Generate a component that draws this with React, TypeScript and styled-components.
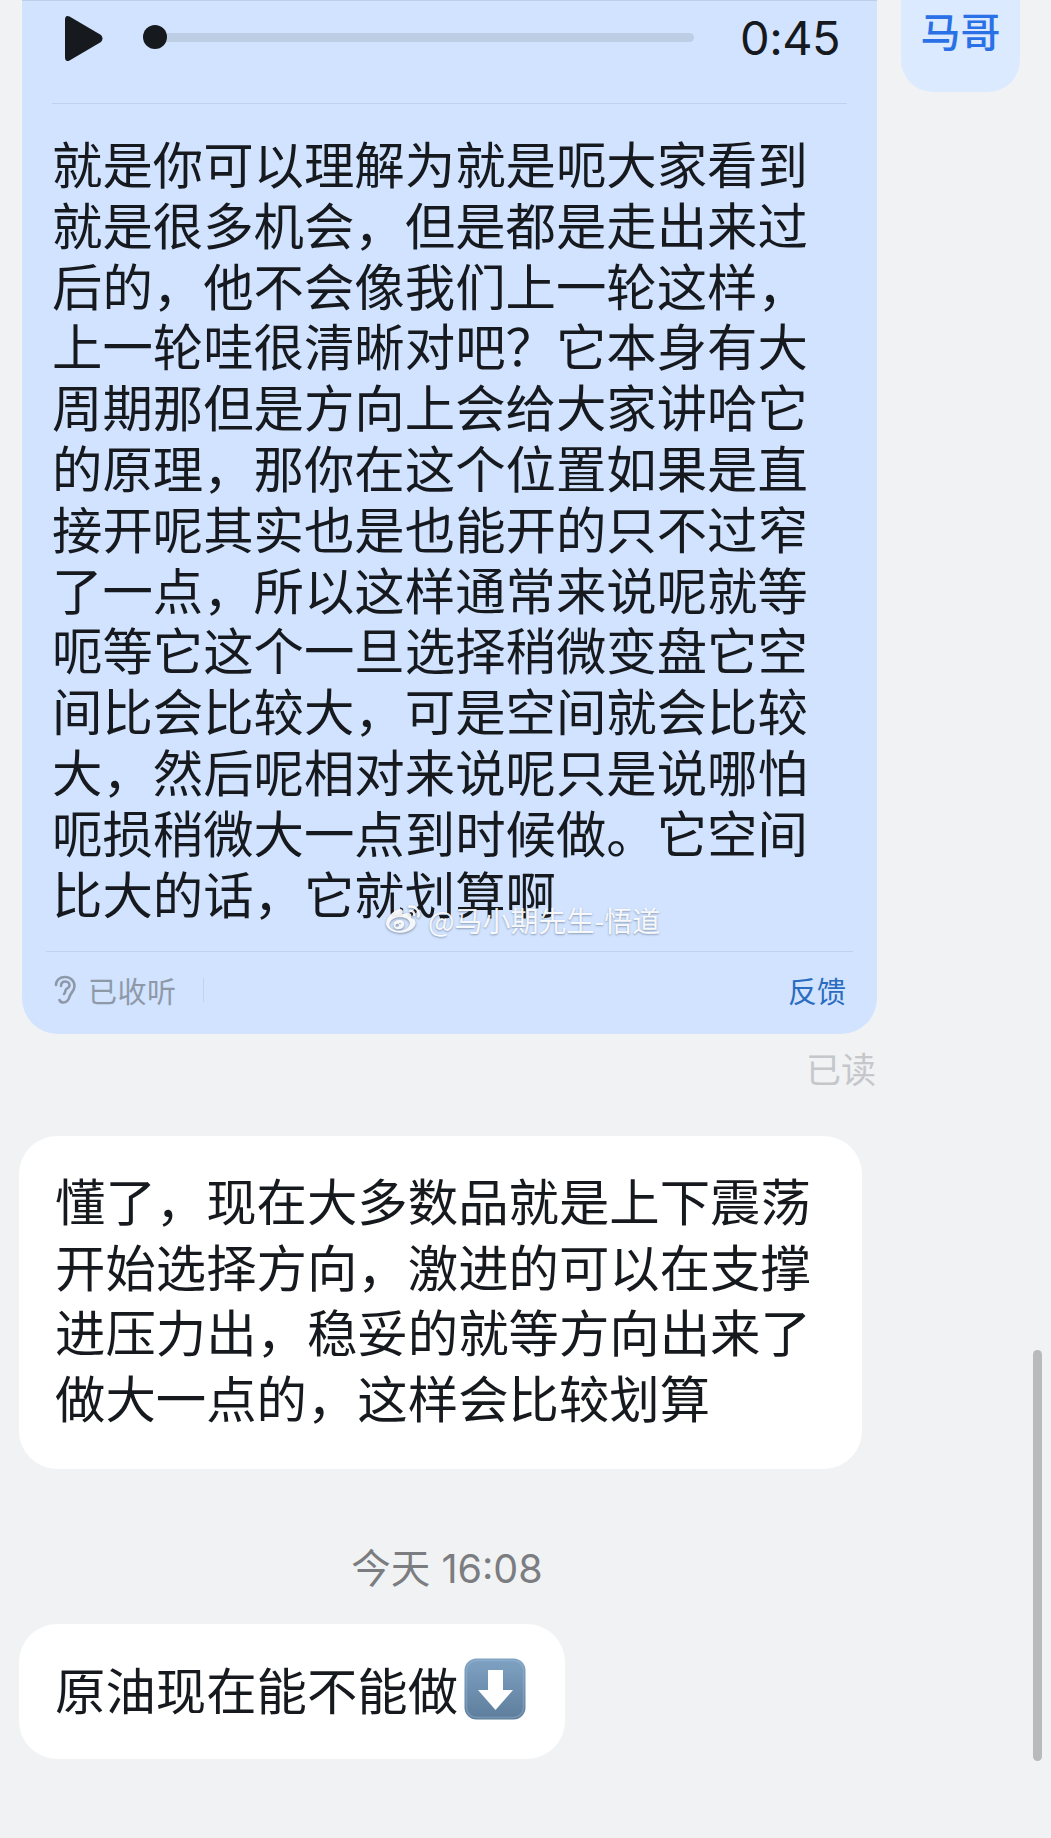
import React from 'react';
import styled, { createGlobalStyle } from 'styled-components';
import { FaWeibo } from 'react-icons/fa';

const GlobalStyle = createGlobalStyle`
  html, body {
    margin: 0;
    padding: 0;
    background: #f1f2f4;
  }
`

const Page = styled.div`
  position: relative;
  width: 1051px;
  height: 1838px;
  overflow: hidden;
  display: flex;
  flex-direction: column;
  background: #f1f2f4;
  color: #16191d;
  font-family: Inter, "Noto Sans CJK SC", sans-serif;
`

const TopRow = styled.div`
  display: flex;
  align-items: flex-start;
  gap: 24px;
  padding-left: 22px;
`

const VoiceBubble = styled.div`
  width: 855px;
  height: 1034px;
  box-sizing: border-box;
  display: flex;
  flex-direction: column;
  padding: 0 24px;
  background: #d1e3ff;
  border-top: 1px solid #bccfe9;
  border-radius: 0 0 36px 36px;
`

const NameTag = styled.div`
  width: 119px;
  height: 92px;
  box-sizing: border-box;
  padding-top: 9px;
  text-align: center;
  background: #dceaff;
  border-radius: 0 0 32px 32px;
  color: #2a70e6;
  font-size: 40px;
  line-height: 48px;
  font-weight: 500;
`

const Player = styled.div`
  height: 103px;
  box-sizing: border-box;
  display: flex;
  align-items: flex-start;
  margin: 0 6px;
  padding: 14px 0 0 11px;
  border-bottom: 1px solid #bdd2f1;
`

const PlayIcon = styled.svg`
  width: 41px;
  height: 47px;
  flex: none;
`

const Track = styled.div`
  position: relative;
  width: 549px;
  height: 9px;
  margin: 18px 0 0 41px;
  border-radius: 5px;
  background: #bccde4;
`

const Knob = styled.span`
  position: absolute;
  left: -2px;
  top: -8px;
  width: 24px;
  height: 24px;
  border-radius: 50%;
  background: #16191d;
`

const Duration = styled.span`
  margin-left: 46px;
  font-size: 47px;
  line-height: 40px;
  padding-top: 3px;
  letter-spacing: -0.5px;
`

const Transcript = styled.div`
  flex: 1;
  padding: 29px 0 0 6px;
  font-family: "Noto Sans CJK SC", sans-serif;
  font-size: 50.4px;
  line-height: 60.8px;
`

const Line = styled.span`
  display: block;
  white-space: nowrap;
`

const Footer = styled.div`
  height: 83px;
  box-sizing: border-box;
  display: flex;
  align-items: center;
  padding: 0 7px 7px 7px;
  border-top: 1px solid #bdd2f1;
  font-family: "Noto Sans CJK SC", sans-serif;
  font-size: 29px;
`

const EarIcon = styled.svg`
  width: 24px;
  height: 30px;
  flex: none;
`

const Heard = styled.span`
  margin-left: 11px;
  color: #8e99a8;
  letter-spacing: 0.5px;
`

const FooterRule = styled.span`
  width: 1px;
  height: 24px;
  margin-left: 26px;
  background: #c0d2ec;
`

const Feedback = styled.span`
  margin-left: auto;
  color: #2a6cc0;
`

const ReadMark = styled.div`
  width: 876px;
  height: 38px;
  margin-top: 15px;
  text-align: right;
  color: #c5c7ca;
  font-family: "Noto Sans CJK SC", sans-serif;
  font-size: 35px;
  line-height: 38px;
`

const TextBubble = styled.div<{ $width: number; $leading: number }>`
  width: ${(p) => p.$width}px;
  box-sizing: border-box;
  margin-left: 19px;
  padding: 31px 0 40px 36px;
  display: flex;
  flex-direction: column;
  background: #fff;
  border-radius: 38px;
  font-family: "Noto Sans CJK SC", sans-serif;
  font-size: 50.4px;
  line-height: ${(p) => p.$leading}px;
`

const Explained = styled(TextBubble)`
  margin-top: 49px;
`

const Question = styled(TextBubble)`
  height: 135px;
  padding: 0 0 6px 36px;
  flex-direction: row;
  align-items: center;
`

const TimeStamp = styled.div`
  width: 894px;
  margin-top: 77px;
  text-align: center;
  color: #7b7d80;
  font-family: Inter, "Noto Sans CJK SC", sans-serif;
  font-size: 39.5px;
  line-height: 46px;
`

const QuestionGap = styled.div`
  height: 32px;
`

const ArrowEmoji = styled.svg`
  width: 62px;
  height: 62px;
  flex: none;
  margin-left: 6px;
`

const ScrollThumb = styled.div`
  position: absolute;
  left: 1033px;
  top: 1350px;
  width: 9px;
  height: 411px;
  border-radius: 5px;
  background: #b9babc;
`

const Watermark = styled.div`
  position: absolute;
  left: 386px;
  top: 902px;
  display: flex;
  align-items: center;
  gap: 8px;
  color: rgba(255, 255, 255, 0.92);
  font-family: "Noto Sans CJK SC", sans-serif;
  font-size: 28px;
  line-height: 36px;
  text-shadow: 0 1px 2px rgba(60, 70, 90, 0.45);

  svg {
    filter: drop-shadow(0 1px 1px rgba(60, 70, 90, 0.6));
  }
`

const transcript = [
  '就是你可以理解为就是呃大家看到',
  '就是很多机会，但是都是走出来过',
  '后的，他不会像我们上一轮这样，',
  '上一轮哇很清晰对吧？它本身有大',
  '周期那但是方向上会给大家讲哈它',
  '的原理，那你在这个位置如果是直',
  '接开呢其实也是也能开的只不过窄',
  '了一点，所以这样通常来说呢就等',
  '呃等它这个一旦选择稍微变盘它空',
  '间比会比较大，可是空间就会比较',
  '大，然后呢相对来说呢只是说哪怕',
  '呃损稍微大一点到时候做。它空间',
  '比大的话，它就划算啊',
];

const reply = [
  '懂了，现在大多数品就是上下震荡',
  '开始选择方向，激进的可以在支撑',
  '进压力出，稳妥的就等方向出来了',
  '做大一点的，这样会比较划算',
];

const App = () => (
  <Page>
    <GlobalStyle />
    <TopRow>
      <VoiceBubble>
        <Player>
          <PlayIcon viewBox="0 0 41 47">
            <path
              d="M2 5 L2 42 Q2 47.500 6.500 45.500 L38 27 Q41 23.500 38 20 L6.500 1.500 Q2 -.5 2 5 Z"
              fill="#16191d"
            />
          </PlayIcon>
          <Track>
            <Knob />
          </Track>
          <Duration>0:45</Duration>
        </Player>
        <Transcript>
          {transcript.map((line) => (
            <Line key={line}>{line}</Line>
          ))}
        </Transcript>
        <Footer>
          <EarIcon viewBox="0 0 24 30" fill="none" stroke="#8e99a8" strokeWidth="2.6" strokeLinecap="round">
            <path d="M3 10C3 5 7 2 12 2c5.500 0 9.500 4 9.500 9 0 4-2.500 6-4 8.500-1.500 2.500-1.500 8-7 8-2 0-3.500-1-4-2.500" />
            <path d="M8 11c0-3 2-4.500 4.500-4.500S16.500 8.500 16.500 10.500c0 2-2 2.500-3.500 4-1 1.500-.5 3.500-2 4.500" />
          </EarIcon>
          <Heard>已收听</Heard>
          <FooterRule />
          <Feedback>反馈</Feedback>
        </Footer>
      </VoiceBubble>
      <NameTag>马哥</NameTag>
    </TopRow>
    <ReadMark>已读</ReadMark>
    <Explained $width={843} $leading={65.6}>
      {reply.map((line) => (
        <Line key={line}>{line}</Line>
      ))}
    </Explained>
    <TimeStamp>今天 16:08</TimeStamp>
    <QuestionGap />
    <Question $width={546} $leading={60}>
      <Line>原油现在能不能做</Line>
      <ArrowEmoji viewBox="0 0 62 62">
        <defs>
          <linearGradient id="arrowKey" x1="0" y1="0" x2="0" y2="1">
            <stop offset="0" stopColor="#7fa2c3" />
            <stop offset="1" stopColor="#5e7d9c" />
          </linearGradient>
        </defs>
        <rect x="0.5" y="0.5" width="61" height="61" rx="12" fill="url(#arrowKey)" />
        <rect x="2.500" y="2.500" width="57" height="57" rx="10" fill="none" stroke="#a4c0da" strokeOpacity="0.35" strokeWidth="1.5" />
        <path d="M24 12h15v20h10L31.500 52 14 32h10z" fill="#fff" />
      </ArrowEmoji>
    </Question>
    <ScrollThumb />
    <Watermark>
      <FaWeibo size={34} />
      <span>@马小期先生-悟道</span>
    </Watermark>
  </Page>
);

export default App;
